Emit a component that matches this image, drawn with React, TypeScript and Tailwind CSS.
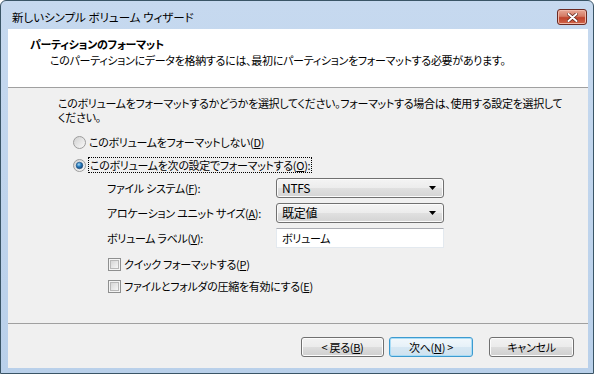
import { FC, ReactNode } from "react";

const Radio: FC<{ checked?: boolean; id: string }> = ({ checked, id }) => (
    <svg width="13" height="13" viewBox="0 0 13 13" className="shrink-0">
        <defs>
            <linearGradient id={`rb-${id}`} x1="0" y1="0" x2="1" y2="1">
                <stop offset="0" stopColor="#cfcfcf" />
                <stop offset="1" stopColor="#fbfbfb" />
            </linearGradient>
            <radialGradient id={`rd-${id}`} cx="0.4" cy="0.35" r="0.7">
                <stop offset="0" stopColor="#a9dcf6" />
                <stop offset="0.45" stopColor="#2c7fc0" />
                <stop offset="1" stopColor="#0c3b6e" />
            </radialGradient>
        </defs>
        <circle cx="6.5" cy="6.5" r="6" fill={`url(#rb-${id})`} stroke="#9c9c9c" />
        {checked && <circle cx="6.5" cy="6.5" r="3.3" fill={`url(#rd-${id})`} stroke="#1d4f80" strokeWidth="0.6" />}
    </svg>
);

const CheckBox: FC = () => (
    <div className="w-[13px] h-[13px] shrink-0 border border-[#8e8f8f] bg-[#f4f4f4] p-[1px]">
        <div className="w-full h-full border border-[#b8b8b8] bg-[linear-gradient(135deg,#d6d6d6,#f6f6f6)]" />
    </div>
);

const Combo: FC<{ value: string }> = ({ value }) => (
    <div className="w-[168px] h-[20px] flex items-center pl-[5px] pr-[7px] rounded-[3px] border border-[#707070] bg-[linear-gradient(#f4f4f4_0%,#ececec_50%,#e0e0e0_51%,#d4d4d4_100%)] shadow-[inset_0_0_0_1px_#fbfbfb]">
        <span className="text-[12px]">{value}</span>
        <svg width="7" height="4" viewBox="0 0 7 4" className="ml-auto">
            <path d="M0 0h7L3.5 4z" fill="#000" />
        </svg>
    </div>
);

const Button: FC<{ children: ReactNode; width: string; primary?: boolean }> = ({ children, width, primary }) => (
    <div
        className={
            primary
                ? `${width} h-[20px] flex items-center justify-center rounded-[3px] border border-[#3d9bd0] bg-[linear-gradient(#f2f8fc_0%,#e6f1f8_50%,#d6e7f3_51%,#cfe2ef_100%)] shadow-[inset_0_0_0_1px_#a8dcf6]`
                : `${width} h-[20px] flex items-center justify-center rounded-[3px] border border-[#707070] bg-[linear-gradient(#f2f2f2_0%,#ebebeb_50%,#dddddd_51%,#cfcfcf_100%)] shadow-[inset_0_0_0_1px_#fcfcfc]`
        }
    >
        {children}
    </div>
);

const App: FC = () => {
    return (
        <div className="w-[596px] h-[384px] bg-white font-['Noto_Sans_CJK_JP',sans-serif] [font-feature-settings:'palt'] text-[11px] tracking-[-0.3px] text-black">
            <div className="w-[594px] h-[374px] flex flex-col rounded-t-[6px] border border-[#3a5566] bg-[linear-gradient(#c6d9ef,#b9d0ea)]">
                {/* title bar */}
                <div className="h-[28px] shrink-0 flex pl-[11px] pr-[6px]">
                    <span className="mt-[8px] leading-[16px] text-[11.5px] tracking-normal">新しいシンプル ボリューム ウィザード</span>
                    <div className="ml-auto mt-[8px] w-[30px] h-[16px] flex items-center justify-center rounded-[3px] border border-[#6b2a22] bg-[linear-gradient(#e8a896_0%,#d47a64_45%,#c0432c_55%,#d0654a_100%)] shadow-[inset_0_0_0_1px_#f0b8a8]">
                        <svg width="11" height="9" viewBox="0 0 11 9">
                            <path d="M1.5 1l8 7M9.5 1l-8 7" stroke="#5a2018" strokeWidth="3.4" strokeLinecap="round" />
                            <path d="M1.5 1l8 7M9.5 1l-8 7" stroke="#fff" strokeWidth="2" strokeLinecap="round" />
                        </svg>
                    </div>
                </div>

                {/* client area */}
                <div className="flex-1 flex pl-[7px] pr-[5px] pb-[5px]">
                    <div className="w-full flex flex-col bg-[#f0f0f0]">
                        <div className="h-[59px] shrink-0 bg-white border-b border-[#a0a0a0] pl-[22px] pt-[7px]">
                            <div className="font-bold leading-[16px]">パーティションのフォーマット</div>
                            <div className="pl-[20px] leading-[16px]">このパーティションにデータを格納するには、最初にパーティションをフォーマットする必要があります。</div>
                        </div>

                        <div className="h-[235px] shrink-0 pl-[50px] pt-[8px]">
                            <p className="leading-[14px] whitespace-nowrap">
                                このボリュームをフォーマットするかどうかを選択してください。フォーマットする場合は、使用する設定を選択して
                                <br />
                                ください。
                            </p>

                            <div className="ml-[15px] mt-[10px] flex flex-col gap-[7px]">
                                <div className="h-[16px] flex items-center gap-[3px]">
                                    <Radio id="a" />
                                    <span>このボリュームをフォーマットしない(<u>D</u>)</span>
                                </div>
                                <div className="h-[16px] flex items-center gap-[2px]">
                                    <Radio id="b" checked />
                                    <span className="border border-dotted border-black px-[1px] leading-[14px]">このボリュームを次の設定でフォーマットする(<u>O</u>):</span>
                                </div>
                            </div>

                            <div className="ml-[49px] mt-[5px] grid grid-cols-[169px_168px] gap-y-[5px]">
                                <div className="h-[20px] flex items-center whitespace-nowrap">ファイル システム(<u>F</u>):</div>
                                <Combo value="NTFS" />
                                <div className="h-[20px] flex items-center whitespace-nowrap">アロケーション ユニット サイズ(<u>A</u>):</div>
                                <Combo value="既定値" />
                                <div className="h-[20px] flex items-center whitespace-nowrap">ボリューム ラベル(<u>V</u>):</div>
                                <div className="w-[168px] h-[20px] flex items-center pl-[5px] bg-white border border-[#e3e9ef] border-t-[#abadb3]">ボリューム</div>
                            </div>

                            <div className="ml-[50px] mt-[8px] flex flex-col gap-[6px]">
                                <div className="h-[16px] flex items-center gap-[3px]">
                                    <CheckBox />
                                    <span>クイック フォーマットする(<u>P</u>)</span>
                                </div>
                                <div className="h-[16px] flex items-center gap-[3px]">
                                    <CheckBox />
                                    <span>ファイルとフォルダの圧縮を有効にする(<u>E</u>)</span>
                                </div>
                            </div>
                        </div>

                        <div className="flex-1 border-t border-[#a0a0a0] flex items-start justify-end pt-[13px] pr-[14px]">
                            <Button width="w-[83px]">&lt; 戻る(<u>B</u>)</Button>
                            <div className="w-[5px]" />
                            <Button width="w-[84px]" primary>次へ(<u>N</u>) &gt;</Button>
                            <div className="w-[16px]" />
                            <Button width="w-[85px]">キャンセル</Button>
                        </div>
                    </div>
                </div>
            </div>
        </div>
    );
};

export default App;
